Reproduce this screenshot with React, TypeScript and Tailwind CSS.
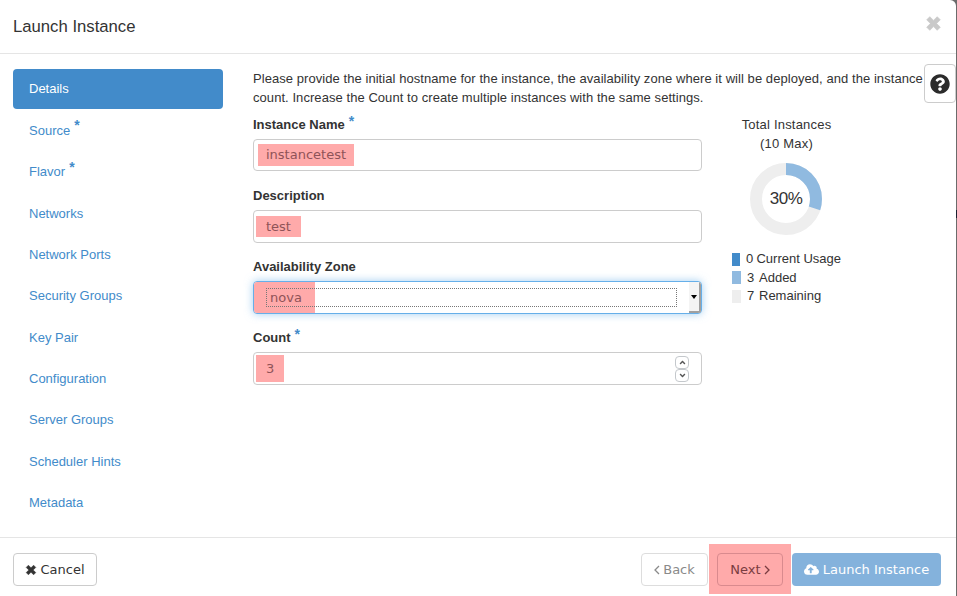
import { FaQuestionCircle, FaCloudUploadAlt, FaAngleUp, FaAngleDown } from 'react-icons/fa';

const navItems = [
  { label: 'Source', required: true },
  { label: 'Flavor', required: true },
  { label: 'Networks' },
  { label: 'Network Ports' },
  { label: 'Security Groups' },
  { label: 'Key Pair' },
  { label: 'Configuration' },
  { label: 'Server Groups' },
  { label: 'Scheduler Hints' },
  { label: 'Metadata' },
];

const verdana = "font-['DejaVu_Sans',sans-serif]";

function Star({ className = '' }: { className?: string }) {
  return <span className={`text-[#428bca] font-bold text-[14px] leading-none ${className}`}>*</span>;
}

function Cross({ className = '' }: { className?: string }) {
  return (
    <svg viewBox="0 0 12 12" className={className} fill="currentColor" stroke="currentColor" strokeWidth="0.5" strokeLinejoin="round">
      <path d="M1.2 3.4 3.4 1.2 6 3.8l2.6-2.6 2.2 2.2L8.2 6l2.6 2.600-2.200 2.200L6 8.200l-2.600 2.600-2.200-2.200L3.800 6z" />
    </svg>
  );
}

function Angle({ dir }: { dir: 'left' | 'right' }) {
  return (
    <svg viewBox="0 0 6 10" className="w-[6px] h-[10px]" fill="none" stroke="currentColor" strokeWidth="1.3">
      <path d={dir === 'left' ? 'M5 1 1 5l4 4' : 'M1 1l4 4-4 4'} />
    </svg>
  );
}

function Field({ label, required, children }: { label: string; required?: boolean; children: React.ReactNode }) {
  return (
    <div className="h-[71px]">
      <div className="h-[25px] flex items-start font-bold text-[#333] leading-[19px] pt-[1px]">
        {label}
        {required && <Star className="ml-[4px] -mt-[1px]" />}
      </div>
      {children}
    </div>
  );
}

export default function App() {
  return (
    <div className="relative w-[957px] h-[596px] bg-[#6b6b6b] overflow-hidden font-['Liberation_Sans',sans-serif] text-[13px] text-[#333]">
      <span className="absolute right-0 top-[210px] w-px h-[8px] bg-[#1a2030]" />
      <div className="w-[956px] h-[596px] bg-white rounded-tr-[6px] flex flex-col">
        <header className="h-[54px] shrink-0 border-b border-[#e5e5e5] flex items-center justify-between pl-[13px] pr-[14px]">
          <h1 className="text-[16.7px] leading-none text-[#333] mt-[1px]">Launch Instance</h1>
          <Cross className="w-[17px] h-[17px] text-[#c9c9c9] -mt-[6px]" />
        </header>

        <div className="flex-1 flex relative">
          <nav className="w-[210px] ml-[13px] mt-[15px] shrink-0">
            <div className="h-[39.8px] rounded-[4px] bg-[#428bca] text-white flex items-center pl-[16px]">Details</div>
            {navItems.map((item) => (
              <div key={item.label} className="h-[39.4px] mt-[2px] flex items-center pl-[16px] text-[#428bca]">
                {item.label}
                {item.required && <Star className="ml-[4px] -mt-[10px]" />}
              </div>
            ))}
          </nav>

          <main className="ml-[30px] flex-1 pt-[15px]">
            <p className="w-[672px] leading-[19px] h-[45px] tracking-[0.06px]">
              Please provide the initial hostname for the instance, the availability zone where it will be deployed, and the instance count. Increase the Count to create multiple instances with the same settings.
            </p>
            <div className="flex">
              <div className="w-[449px]">
                <Field label="Instance Name" required>
                  <div className={`h-[32px] w-full border border-[#ccc] rounded-[4px] bg-white p-[4px] flex ${verdana}`}>
                    <span className="bg-[#ffaaaa] text-[#8f5358] px-[8px] flex items-center">instancetest</span>
                  </div>
                </Field>
                <Field label="Description">
                  <div className={`h-[33px] w-full border border-[#ccc] rounded-[4px] bg-white pl-[1px] py-[5px] flex ${verdana}`}>
                    <span className="ml-[1px] bg-[#ffaaaa] text-[#8f5358] px-[10px] flex items-center">test</span>
                  </div>
                </Field>
                <Field label="Availability Zone">
                  <div className={`h-[33px] w-full border border-[#66afe9] rounded-[4px] bg-white flex relative shadow-[0_0_8px_rgba(102,175,233,0.6)] overflow-hidden ${verdana}`}>
                    <span className="w-[61px] bg-[#ffaaaa] text-[#8f5358] pl-[16px] flex items-center">nova</span>
                    <div className="absolute left-[12px] top-[6px] w-[411px] h-[19px] border border-dotted border-[#777]" />
                    <div className="ml-auto w-[12px] bg-[#f4f4f4] border-r-2 border-b-2 border-[#a0a0a0] flex items-center justify-center">
                      <span className="w-0 h-0 border-x-[3px] border-x-transparent border-t-[4px] border-t-black" />
                    </div>
                  </div>
                </Field>
                <Field label="Count" required>
                  <div className={`h-[33px] w-full border border-[#ccc] rounded-[4px] bg-white flex items-center pl-[1px] pr-[12px] ${verdana}`}>
                    <span className="ml-[1px] h-[27px] bg-[#ffaaaa] text-[#8f5358] px-[10px] flex items-center">3</span>
                    <div className="ml-auto flex flex-col">
                      <span className="w-[14px] h-[13px] border border-[#c4c8cc] rounded-[4px] flex items-center justify-center text-[#555]">
                        <FaAngleUp className="w-[9px] h-[9px]" />
                      </span>
                      <span className="w-[14px] h-[13px] border border-[#c4c8cc] rounded-[4px] flex items-center justify-center text-[#555]">
                        <FaAngleDown className="w-[9px] h-[9px]" />
                      </span>
                    </div>
                  </div>
                </Field>
              </div>

              <aside className="ml-[30px] w-[109px] whitespace-nowrap pt-[1px]">
                <div className="text-center leading-[19px] tracking-[0.2px]">
                  Total Instances
                  <br />
                  (10 Max)
                </div>
                <div className="relative w-[72px] h-[72px] ml-[18px] mt-[10px]">
                  <svg viewBox="0 0 72 72" className="w-[72px] h-[72px] -rotate-90">
                    <circle cx="36" cy="36" r="30" fill="none" stroke="#eeeeee" strokeWidth="12" />
                    <circle cx="36" cy="36" r="30" fill="none" stroke="#90bae0" strokeWidth="12" strokeDasharray="56.55 188.5" />
                  </svg>
                  <div className="absolute inset-0 flex items-center justify-center text-[17px] tracking-[-0.5px]">30%</div>
                </div>
                <ul className="mt-[15px] leading-[18.5px]">
                  <li className="flex items-center h-[18.5px]"><i className="w-[9px] h-[13px] bg-[#428bca] mr-[6px]" /><span className="w-[12px]">0</span>Current Usage</li>
                  <li className="flex items-center h-[18.5px]"><i className="w-[9px] h-[13px] bg-[#90bae0] mr-[6px]" /><span className="w-[12px]">3</span>Added</li>
                  <li className="flex items-center h-[18.5px]"><i className="w-[9px] h-[13px] bg-[#eeeeee] mr-[6px]" /><span className="w-[12px]">7</span>Remaining</li>
                </ul>
              </aside>
            </div>
          </main>

          <button className="absolute right-0 top-[10px] w-[32px] h-[39px] border border-[#ccc] rounded-[4px] bg-white flex items-center justify-center">
            <FaQuestionCircle className="w-[20px] h-[20px] text-[#2b2b2b]" />
          </button>
        </div>

        <footer className={`h-[59px] shrink-0 border-t border-[#e5e5e5] flex items-center pt-[5px] pl-[13px] pr-[15px] ${verdana}`}>
          <button className="h-[33px] w-[84px] border border-[#ccc] rounded-[4px] text-[#333] flex items-center justify-center gap-[3px]">
            <Cross className="w-[12px] h-[12px]" />
            Cancel
          </button>
          <button className="ml-auto h-[33px] w-[67px] border border-[#ddd] rounded-[4px] text-[#8a8a8a] flex items-center justify-center gap-[3px]">
            <Angle dir="left" />
            Back
          </button>
          <div className="ml-[1px] -mt-[2px] h-[50px] w-[82px] pt-[2px] bg-[#ffaaaa] flex items-center justify-center">
            <button className="h-[33px] w-[66px] border border-[#d98a8e] rounded-[4px] text-[#7a3c40] flex items-center justify-center gap-[3px]">
              Next
              <Angle dir="right" />
            </button>
          </div>
          <button className="h-[33px] w-[149px] ml-[1px] rounded-[4px] bg-[#84b2dc] text-white flex items-center justify-center gap-[4px]">
            <FaCloudUploadAlt className="w-[15px] h-[13px]" />
            Launch Instance
          </button>
        </footer>
      </div>
    </div>
  );
}
